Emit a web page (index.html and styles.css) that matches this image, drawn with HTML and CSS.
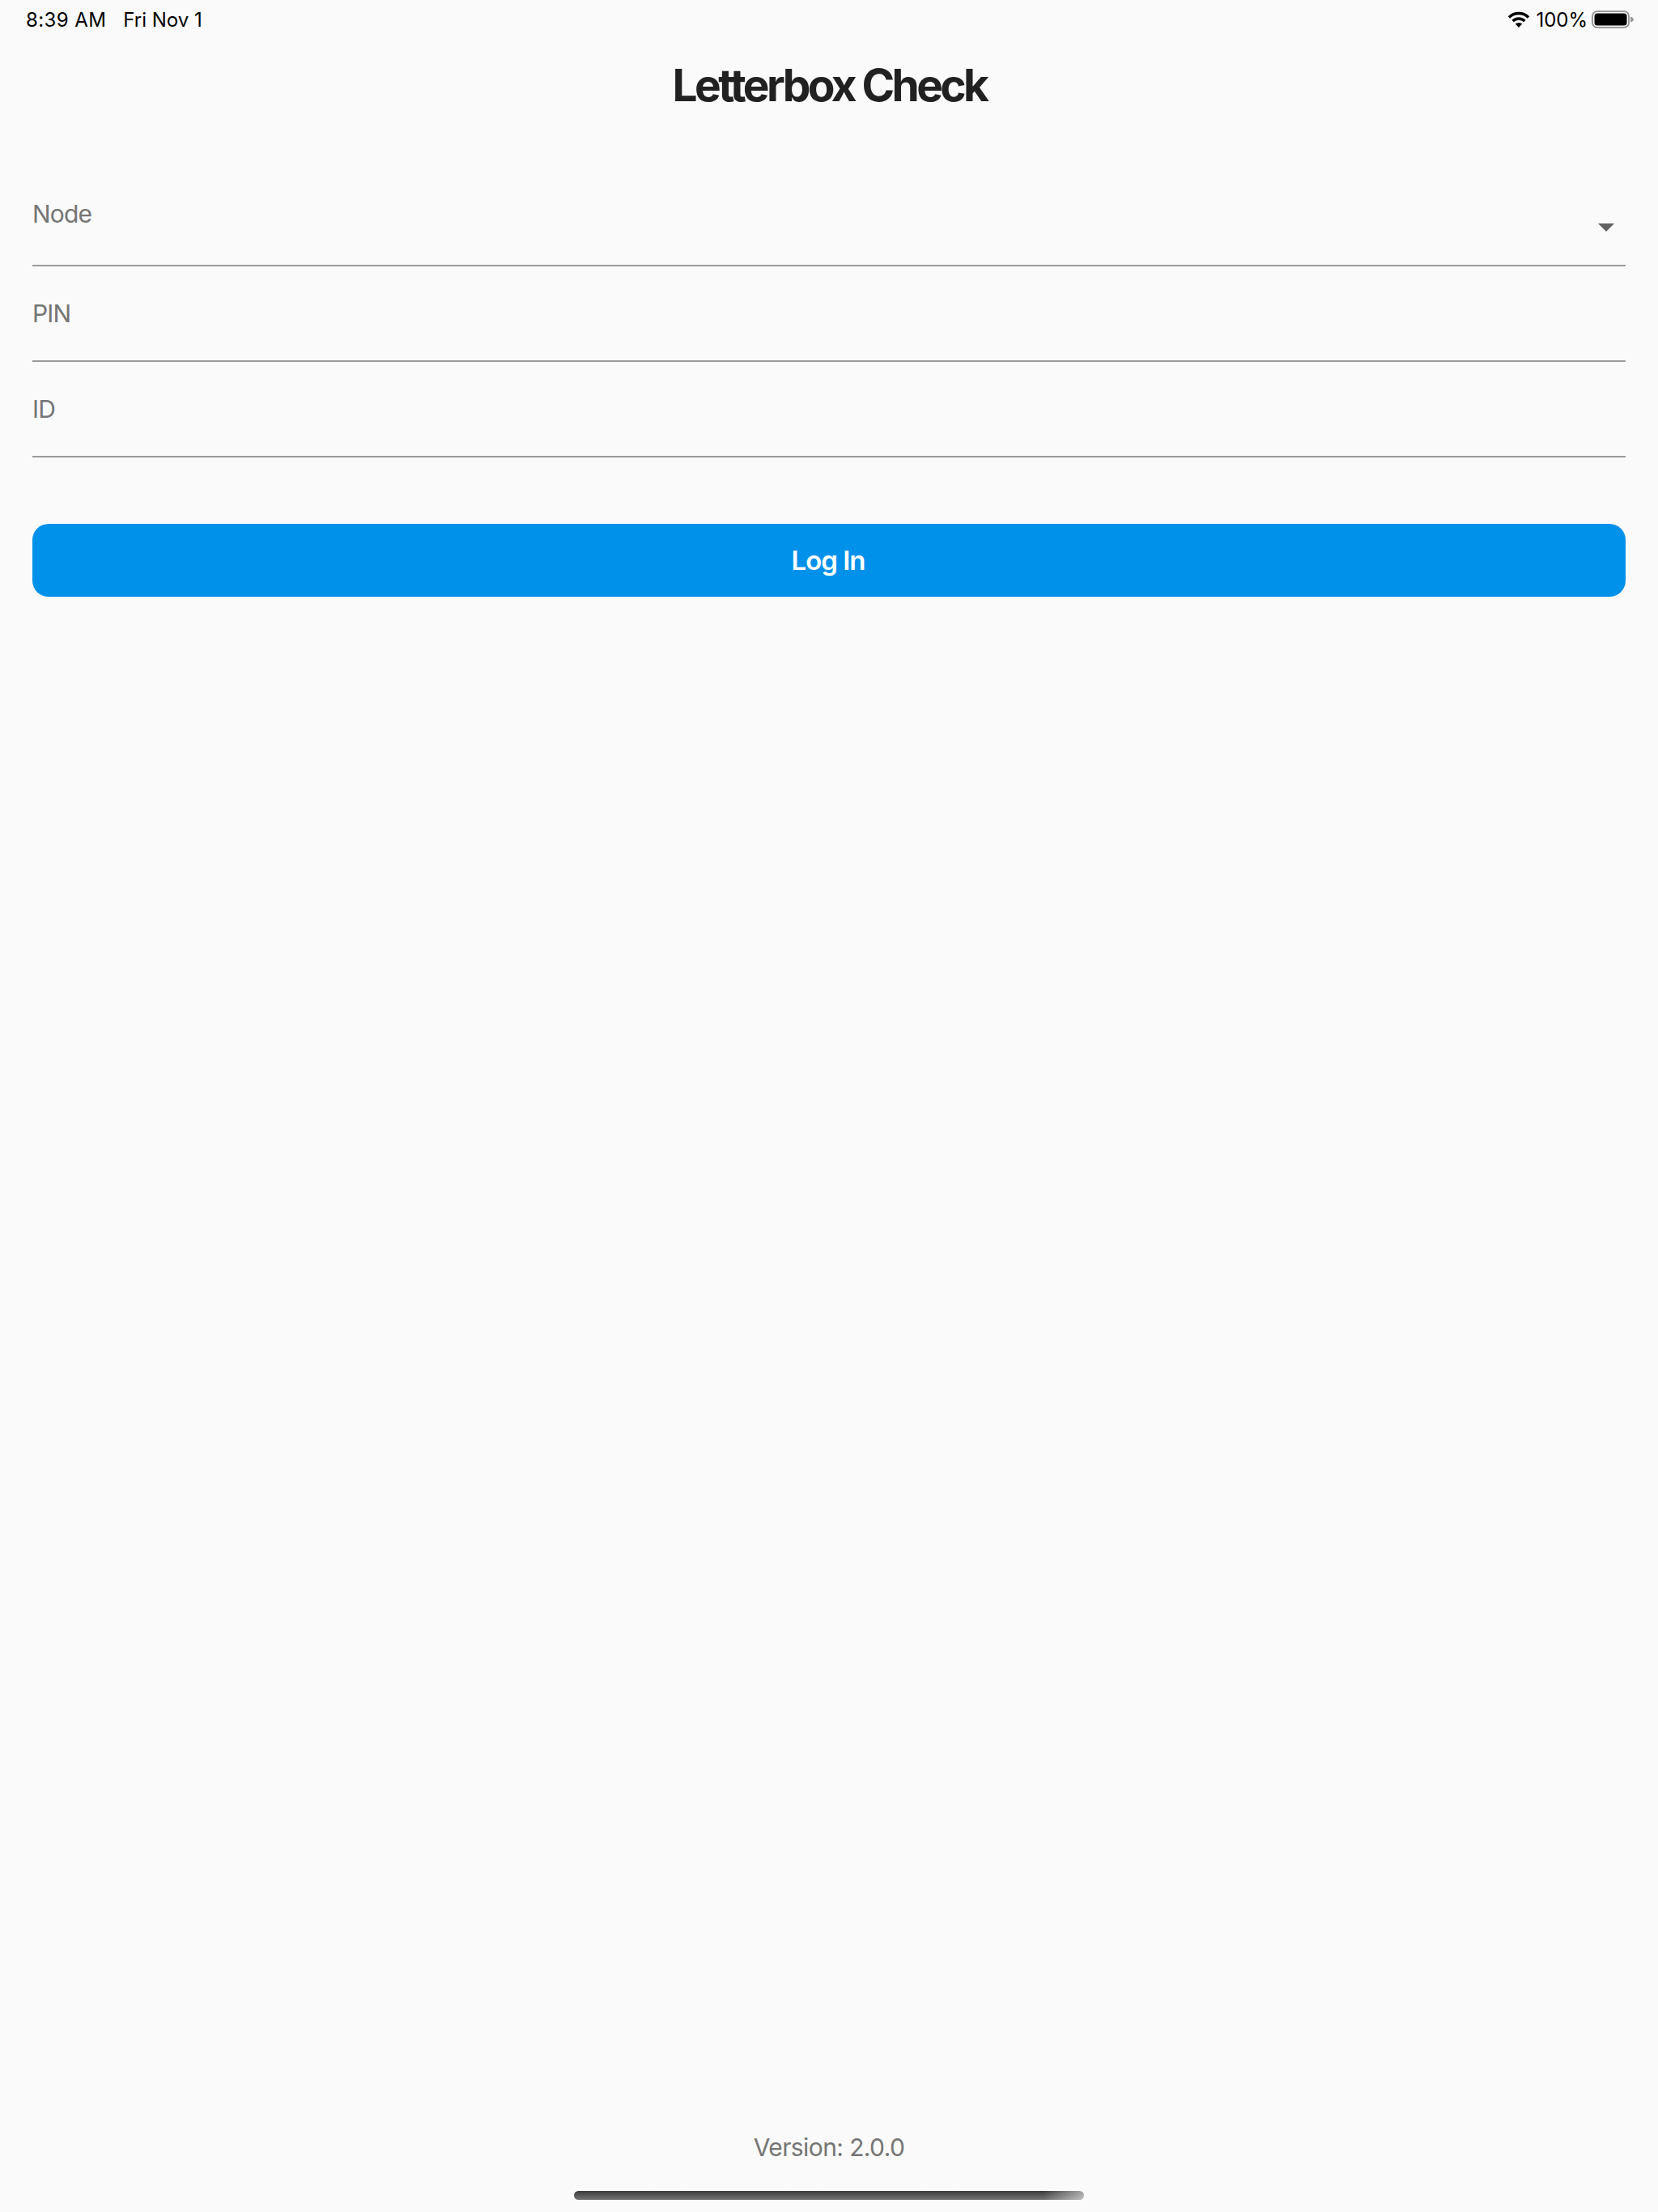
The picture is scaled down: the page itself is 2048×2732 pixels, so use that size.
FILE: index.html
```html
<!DOCTYPE html>
<html lang="en">
<head>
  <meta charset="UTF-8">
  <meta name="viewport" content="width=device-width, initial-scale=1.0">
  <title>Letterbox Check</title>
  <link rel="stylesheet" href="styles.css">
</head>
<body>
  <div class="page">
    <div class="status">
      <div class="status-left">
        <span>8:39 AM</span>
        <span class="date">Fri Nov 1</span>
      </div>
      <div class="status-right">
        <svg class="wifi" width="28" height="20" viewBox="0 0 28 20">
          <path d="M2 7.5A17 17 0 0 1 26 7.5" fill="none" stroke="#000" stroke-width="3.4"/>
          <path d="M6.6 12A10.5 10.5 0 0 1 21.4 12" fill="none" stroke="#000" stroke-width="3.4"/>
          <path d="M14 20L9.8 15.6A6 6 0 0 1 18.2 15.6Z" fill="#000"/>
        </svg>
        <span>100%</span>
        <svg class="battery" width="52" height="22" viewBox="0 0 52 22">
          <rect x="1" y="1" width="45" height="20" rx="6" fill="none" stroke="#999" stroke-width="2"/>
          <rect x="3.5" y="3.5" width="40" height="15" rx="3.5" fill="#000"/>
          <path d="M48 7.5C50 8 52 9.5 52 11C52 12.5 50 14 48 14.5Z" fill="#999"/>
        </svg>
      </div>
    </div>

    <h1 class="title">Letterbox Check</h1>

    <div class="form">
      <div class="field field-select">
        <span class="label">Node</span>
        <svg class="caret" width="20" height="10" viewBox="0 0 20 10">
          <polygon points="0,0 20,0 10,10" fill="#616161"/>
        </svg>
      </div>
      <div class="field"><span class="label">PIN</span></div>
      <div class="field"><span class="label">ID</span></div>
      <div class="btn">Log In</div>
    </div>

    <div class="footer">
      <div class="version">Version: 2.0.0</div>
      <div class="home-bar"></div>
    </div>
  </div>
</body>
</html>
```

FILE: styles.css
```css
*{margin:0; padding:0; box-sizing:border-box;}
body{background:#fafafa; font-family:Inter, "Liberation Sans", sans-serif;}
.page{height:2732px; display:flex; flex-direction:column; overflow:hidden;}

.status{height:48px; padding:0 30px 0 32px; display:flex; justify-content:space-between; align-items:center; font-size:24px; color:#000;}
.status-left{display:flex; gap:21px; letter-spacing:0.4px;}
.status-left .date{letter-spacing:0;}
.status-right{display:flex; align-items:center; gap:7px;}
.wifi{display:block;}
.battery{display:block; margin-left:-2px;}

.title{height:116px; padding:23px 0 0 1px; text-align:center; font-size:55px; line-height:68px; font-weight:700; letter-spacing:-3.6px; color:#212121;}

.form{padding:0 40px;}
.field{height:118px; padding-top:40px; border-bottom:2px solid #999; display:flex; justify-content:space-between; align-items:flex-start;}
.field-select{height:165px; padding-top:82px;}
.label{font-size:30px; line-height:36px; letter-spacing:-0.8px; color:#757575;}
.caret{display:block; margin:30px 14px 0 0;}

.btn{height:90px; margin-top:82px; padding-right:2px; border-radius:20px; background:#0091ea; color:#fff; text-align:center; font-size:33px; line-height:90px; font-weight:600; letter-spacing:-1px;}

.footer{margin-top:auto; display:flex; flex-direction:column; align-items:center;}
.version{font-size:30px; line-height:36px; letter-spacing:-0.6px; color:#757575;}
.home-bar{width:630px; height:11px; margin:36px 0 15px; border-radius:6px; background:linear-gradient(to right, transparent 92%, rgba(250,250,250,.55)), linear-gradient(to bottom, #3a3a3a, #757575);}
```
